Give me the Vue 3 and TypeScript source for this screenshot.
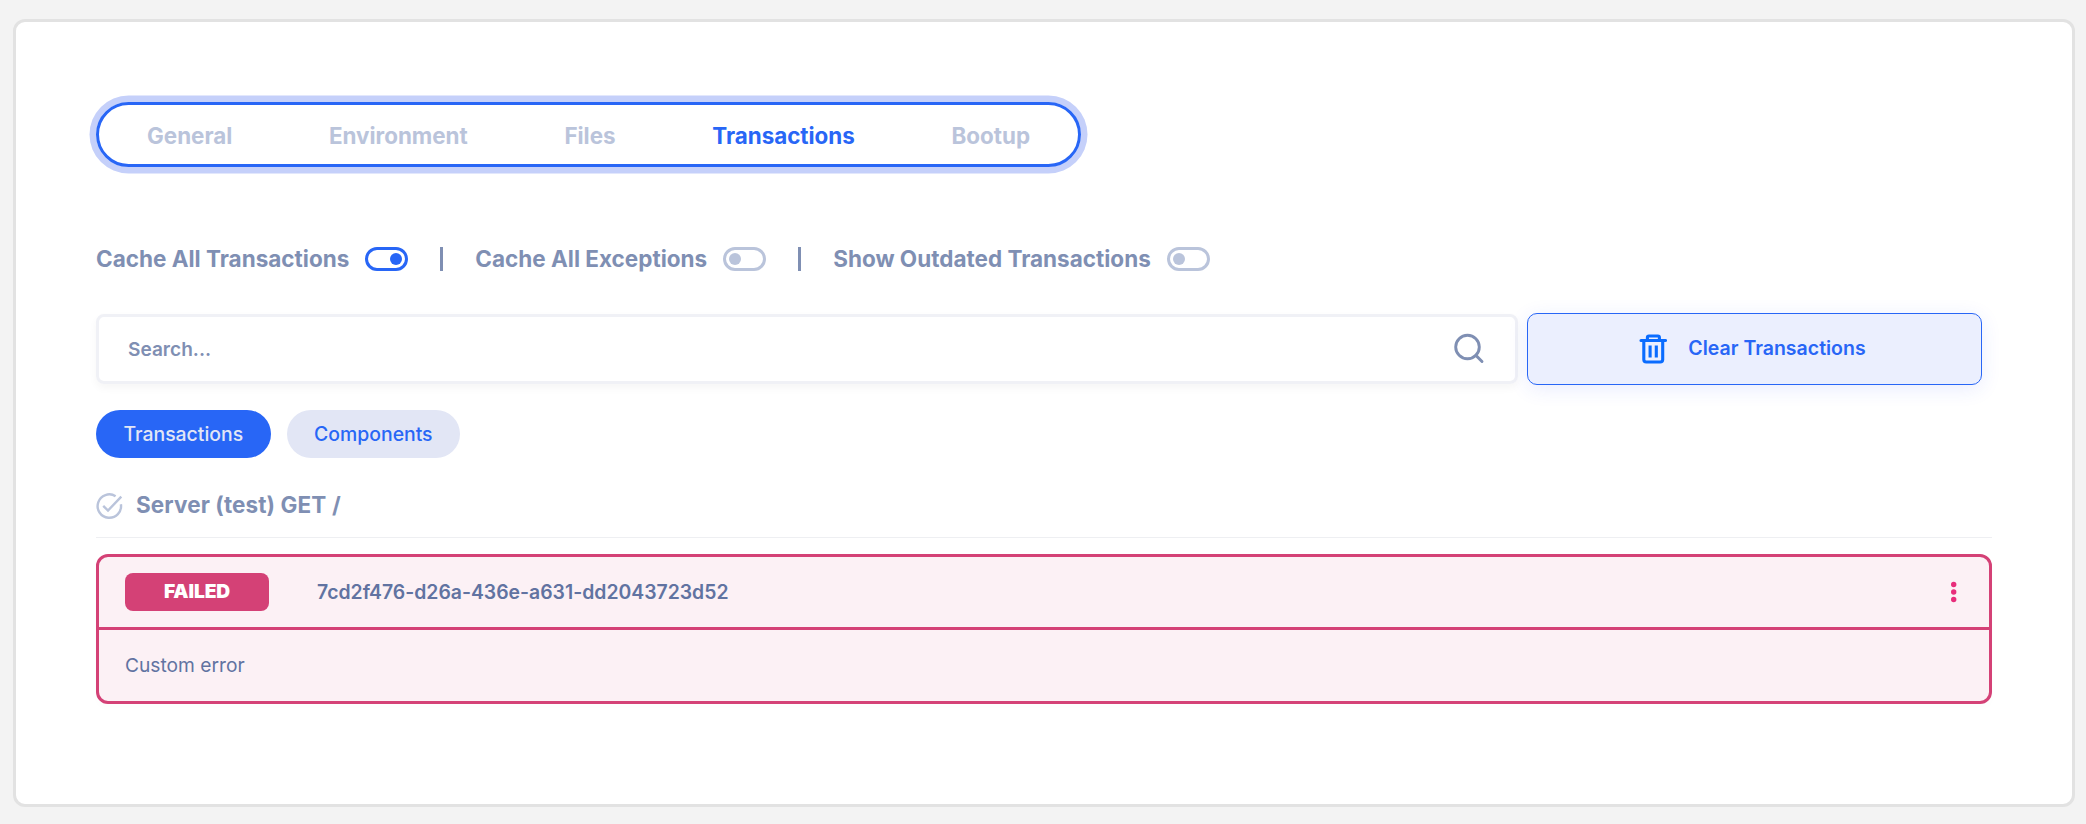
<script setup lang="ts">
import { ref } from 'vue'

interface Setting {
  label: string
  on: boolean
}

const tabs = ['General', 'Environment', 'Files', 'Transactions', 'Bootup']
const activeTab = ref('Transactions')
const settings = ref<Setting[]>([
  { label: 'Cache All Transactions', on: true },
  { label: 'Cache All Exceptions', on: false },
  { label: 'Show Outdated Transactions', on: false },
])
const filters = ['Transactions', 'Components']
const activeFilter = ref('Transactions')
const query = ref('')
</script>

<template>
  <main class="card">
    <nav class="tabs">
      <a v-for="t in tabs" :key="t" class="tab" :class="{ active: t === activeTab }" @click="activeTab = t">{{ t }}</a>
    </nav>

    <div class="settings">
      <div v-for="s in settings" :key="s.label" class="setting">
        <span class="setting-label">{{ s.label }}</span>
        <span class="switch" :class="{ on: s.on }" @click="s.on = !s.on"><i class="knob"></i></span>
      </div>
    </div>

    <div class="actions">
      <label class="search">
        <input v-model="query" placeholder="Search..." />
        <svg width="32" height="32" viewBox="0 0 32 32" fill="none" stroke="#7f8fb3" stroke-width="2.9">
          <circle cx="14.500" cy="14" r="11.8" />
          <path d="M22.900 22.400 29 28.500" stroke-linecap="round" />
        </svg>
      </label>
      <button class="clear">
        <svg width="28" height="30" viewBox="0 0 28 30" fill="none" stroke="#0a6cff" stroke-width="3.1">
          <path d="M2 6.500H26.500" stroke-linecap="round" />
          <path d="M8.400 6V3.500Q8.400 2 9.900 2H18.900Q20.400 2 20.400 3.500V6" />
          <path d="M4.800 7V25.500Q4.800 28 7.300 28H21.200Q23.700 28 23.700 25.500V7" />
          <path d="M11.100 11.500V23.500M17.300 11.500V23.500" />
        </svg>
        <span class="clear-label">Clear Transactions</span>
      </button>
    </div>

    <div class="filters">
      <button v-for="f in filters" :key="f" class="pill" :class="{ active: f === activeFilter }" @click="activeFilter = f">{{ f }}</button>
    </div>

    <h2 class="group">
      <svg class="check" width="27" height="27" viewBox="0 0 27 27" fill="none" stroke="#bac4db" stroke-width="2.4">
        <path d="M19.600 3.200A11.700 11.700 0 1 0 24.900 11.300" />
        <path d="M7.200 12.800 12 17.500 25.300 3.600" />
      </svg>
      <span>Server (test) GET /</span>
    </h2>

    <section class="failure">
      <header class="head">
        <span class="badge">FAILED</span>
        <span class="id">7cd2f476-d26a-436e-a631-dd2043723d52</span>
        <svg class="more" width="6" height="22" viewBox="0 0 6 22" fill="#e82e7b">
          <circle cx="2.700" cy="3.500" r="2.700" />
          <circle cx="2.700" cy="11" r="2.700" />
          <circle cx="2.700" cy="18.500" r="2.700" />
        </svg>
      </header>
      <p class="message">Custom error</p>
    </section>
  </main>
</template>

<style>
body {
  background: #f3f3f3;
}
</style>

<style scoped>
.card,
.card * {
  box-sizing: border-box;
}
.card {
  width: 2062px;
  height: 788px;
  margin: 19px 0 0 13px;
  padding: 80px 80px 0;
  border: 3px solid #e2e2e2;
  border-radius: 12px;
  background: #fff;
  font-family: Inter, 'Liberation Sans', sans-serif;
  color: #7f8fb3;
}
.tabs {
  display: flex;
  align-items: center;
  justify-content: space-between;
  width: 985px;
  height: 65px;
  padding: 2px 48px 0;
  border: 3px solid #2866f6;
  border-radius: 33px;
  box-shadow: 0 0 0 6.5px #c5d0fa;
}
.tab {
  font-size: 22.4px;
  font-weight: 700;
  color: #bac4db;
  cursor: pointer;
}
.tab.active {
  color: #2866f6;
}
.settings {
  display: flex;
  height: 24px;
  margin-top: 80px;
  font-size: 22.5px;
  font-weight: 700;
}
.setting {
  display: flex;
  align-items: center;
  gap: 16px;
}
.setting-label {
  padding-bottom: 2px;
}
.setting + .setting {
  margin-left: 32px;
  padding-left: 32px;
  border-left: 3px solid #7f8fb3;
}
.switch {
  display: flex;
  align-items: center;
  width: 43px;
  height: 24px;
  padding: 0 3px 1px;
  border: 3px solid #bac4db;
  border-radius: 12px;
}
.knob {
  width: 12px;
  height: 12px;
  border-radius: 50%;
  background: #bac4db;
}
.switch.on {
  justify-content: flex-end;
  border-color: #2866f6;
}
.switch.on .knob {
  background: #2866f6;
}
.actions {
  display: flex;
  gap: 9px;
  align-items: center;
  margin-top: 42px;
}
.search {
  display: flex;
  align-items: center;
  width: 1422px;
  height: 70px;
  padding: 0 30px 0 29px;
  border: 3px solid #f0f1f6;
  border-radius: 8px;
  box-shadow: 0 4px 8px rgba(0, 0, 0, 0.04);
}
.search input {
  flex: 1;
  padding: 0;
  border: 0;
  outline: 0;
  background: none;
  font: 600 19.1px Inter, sans-serif;
  color: #7f8fb3;
}
.search input::placeholder {
  color: #7f8fb3;
  opacity: 1;
}
.clear {
  display: flex;
  align-items: center;
  justify-content: center;
  gap: 21px;
  width: 455px;
  height: 72px;
  padding: 0 4px 0 0;
  border: 1px solid #2866f6;
  border-radius: 10px;
  background: #ebeffe;
  box-shadow: 0 4px 20px rgba(40, 70, 246, 0.1);
  font: 600 19.5px Inter, sans-serif;
  color: #2866f6;
}
.clear-label {
  padding-bottom: 2px;
}
.filters {
  display: flex;
  gap: 16px;
  margin-top: 25px;
}
.pill {
  height: 48px;
  padding: 0 27.5px;
  border: 0;
  border-radius: 24px;
  background: #e2e6f5;
  font: 500 19.4px Inter, sans-serif;
  color: #2866f6;
}
.pill.active {
  background: #2866f6;
  color: #e2e6f5;
}
.group {
  display: flex;
  align-items: center;
  gap: 13px;
  height: 80px;
  margin: 0 0 16px;
  padding-top: 14px;
  border-bottom: 1px solid #eeeff2;
  font-size: 22.5px;
  font-weight: 700;
  letter-spacing: 0.1px;
}
.check {
  margin-top: 3px;
}
.failure {
  height: 150px;
  border: 3px solid #d44176;
  border-radius: 12px;
  background: #fcf1f5;
  box-shadow: 0 5px 6px rgba(0, 0, 0, 0.01);
  color: #6173a1;
}
.head {
  display: flex;
  align-items: center;
  height: 73px;
  padding: 0 32px 0 26px;
  border-bottom: 3px solid #d44176;
}
.badge {
  width: 144px;
  height: 38px;
  border-radius: 8px;
  background: #d44176;
  color: #fff;
  font-size: 19.2px;
  font-weight: 900;
  letter-spacing: -0.1px;
  line-height: 37px;
  text-align: center;
}
.id {
  margin-left: 48px;
  font-size: 19.4px;
  font-weight: 600;
}
.more {
  margin-left: auto;
}
.message {
  margin: 0;
  padding-left: 26px;
  font-size: 19.2px;
  line-height: 71px;
}
</style>
